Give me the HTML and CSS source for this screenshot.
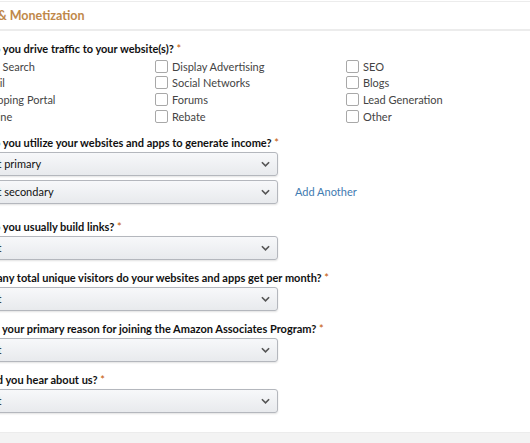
FILE: index.html
```html
<!DOCTYPE html>
<html lang="en">
<head>
<meta charset="utf-8">
<title>Traffic &amp; Monetization</title>
<link rel="stylesheet" href="styles.css">
</head>
<body>
<div class="page">
  <div class="section-head">
    <h2 class="section-title">Traffic &amp; Monetization</h2>
  </div>
  <form class="form">
    <div class="group">
      <div class="q">How do you drive traffic to your website(s)? <span class="req">*</span></div>
      <div class="checks">
        <label class="check"><span class="box"></span>Paid Search</label>
        <label class="check"><span class="box"></span>Display Advertising</label>
        <label class="check"><span class="box"></span>SEO</label>
        <label class="check"><span class="box"></span>Email</label>
        <label class="check"><span class="box"></span>Social Networks</label>
        <label class="check"><span class="box"></span>Blogs</label>
        <label class="check"><span class="box"></span>Shopping Portal</label>
        <label class="check"><span class="box"></span>Forums</label>
        <label class="check"><span class="box"></span>Lead Generation</label>
        <label class="check"><span class="box"></span>Offline</label>
        <label class="check"><span class="box"></span>Rebate</label>
        <label class="check"><span class="box"></span>Other</label>
      </div>
    </div>

    <div class="group g2">
      <div class="q">How do you utilize your websites and apps to generate income? <span class="req">*</span></div>
      <div class="row">
        <div class="select"><span>Select primary</span><svg class="chev" viewBox="0 0 10 6" width="9" height="6"><path d="M1 1 L5 5 L9 1" fill="none" stroke="#555" stroke-width="1.8"/></svg></div>
      </div>
      <div class="row row2">
        <div class="select"><span>Select secondary</span><svg class="chev" viewBox="0 0 10 6" width="9" height="6"><path d="M1 1 L5 5 L9 1" fill="none" stroke="#555" stroke-width="1.8"/></svg></div>
        <a class="add" href="#">Add Another</a>
      </div>
    </div>

    <div class="group g3">
      <div class="q">How do you usually build links? <span class="req">*</span></div>
      <div class="select"><span>Select</span><svg class="chev" viewBox="0 0 10 6" width="9" height="6"><path d="M1 1 L5 5 L9 1" fill="none" stroke="#555" stroke-width="1.8"/></svg></div>
    </div>

    <div class="group">
      <div class="q">How many total unique visitors do your websites and apps get per month? <span class="req">*</span></div>
      <div class="select"><span>Select</span><svg class="chev" viewBox="0 0 10 6" width="9" height="6"><path d="M1 1 L5 5 L9 1" fill="none" stroke="#555" stroke-width="1.8"/></svg></div>
    </div>

    <div class="group">
      <div class="q">What is your primary reason for joining the Amazon Associates Program? <span class="req">*</span></div>
      <div class="select"><span>Select</span><svg class="chev" viewBox="0 0 10 6" width="9" height="6"><path d="M1 1 L5 5 L9 1" fill="none" stroke="#555" stroke-width="1.8"/></svg></div>
    </div>

    <div class="group">
      <div class="q">How did you hear about us? <span class="req">*</span></div>
      <div class="select"><span>Select</span><svg class="chev" viewBox="0 0 10 6" width="9" height="6"><path d="M1 1 L5 5 L9 1" fill="none" stroke="#555" stroke-width="1.8"/></svg></div>
    </div>
  </form>
  <div class="footer-band"></div>
</div>
</body>
</html>
```

FILE: styles.css
```css
html, body {
  margin: 0;
  padding: 0;
  background: #ffffff;
  overflow: hidden;
}

body {
  font-family: Lato, "Open Sans", sans-serif;
  color: #222;
  font-size: 11px;
}

.page {
  margin-left: -38px;
  width: 600px;
}

.section-head {
  margin-top: 1px;
  border-top: 1px solid #ececec;
  border-bottom: 2px solid #ececec;
  height: 27px;
  display: flex;
  align-items: center;
}

.section-title {
  margin: 0 0 0 -2px;
  font-size: 12.5px;
  font-weight: 700;
  color: #c0884a;
}

.form {
  padding-top: 10px;
}

.group {
  margin-top: 10px;
}

.group:first-child {
  margin-top: 0;
}

.g2 {
  margin-top: 10px;
}

.g3 {
  margin-top: 15px;
}

.q {
  font-weight: 700;
  color: #111;
  line-height: 16px;
  margin-bottom: 1px;
}

.req {
  color: #c45500;
  font-weight: 400;
}

.checks {
  display: grid;
  grid-template-columns: 193px 191px 1fr;
  grid-auto-rows: 16.67px;
}

.check {
  display: flex;
  align-items: center;
  color: #444;
  white-space: nowrap;
}

.box {
  width: 11px;
  height: 11px;
  border: 1px solid #a8a8a8;
  border-radius: 2px;
  margin-right: 4px;
  background: #fff;
  flex: none;
}

.row {
  display: flex;
  align-items: center;
}

.row2 {
  margin-top: 4px;
}

.select {
  box-sizing: border-box;
  width: 315px;
  height: 24px;
  margin-left: 1px;
  padding: 0 7px 0 8px;
  display: flex;
  align-items: center;
  justify-content: space-between;
  border: 1px solid #b4b7bd;
  border-radius: 3px;
  background: linear-gradient(#f7f8fa, #e8eaed);
  box-shadow: 0 1px 2px rgba(0, 0, 0, 0.12);
  color: #111;
}

.chev {
  flex: none;
}

.add {
  margin-left: 17px;
  color: #3f7bb1;
  text-decoration: none;
  font-size: 11px;
}

.footer-band {
  margin-top: 19px;
  height: 12px;
  background: #f3f3f3;
  border-top: 1px solid #ececec;
}
```
